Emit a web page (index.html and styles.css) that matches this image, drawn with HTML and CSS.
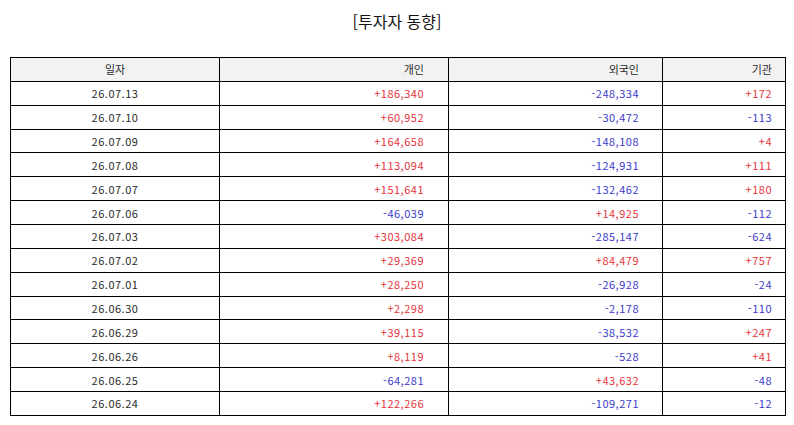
FILE: index.html
```html
<!DOCTYPE html>
<html lang="ko">
<head>
<meta charset="utf-8">
<title>투자자 동향</title>
<link rel="stylesheet" href="styles.css">
</head>
<body>
<h1 class="title">[투자자 동향]</h1>
<table class="flow">
  <colgroup>
    <col class="w-date"><col class="w-ind"><col class="w-for"><col class="w-inst">
  </colgroup>
  <thead>
    <tr><th class="c-date">일자</th><th class="c-ind">개인</th><th class="c-for">외국인</th><th class="c-inst">기관</th></tr>
  </thead>
  <tbody>
    <tr><td class="c-date">26.07.13</td><td class="c-ind up">+186,340</td><td class="c-for down">-248,334</td><td class="c-inst up">+172</td></tr>
    <tr><td class="c-date">26.07.10</td><td class="c-ind up">+60,952</td><td class="c-for down">-30,472</td><td class="c-inst down">-113</td></tr>
    <tr><td class="c-date">26.07.09</td><td class="c-ind up">+164,658</td><td class="c-for down">-148,108</td><td class="c-inst up">+4</td></tr>
    <tr><td class="c-date">26.07.08</td><td class="c-ind up">+113,094</td><td class="c-for down">-124,931</td><td class="c-inst up">+111</td></tr>
    <tr><td class="c-date">26.07.07</td><td class="c-ind up">+151,641</td><td class="c-for down">-132,462</td><td class="c-inst up">+180</td></tr>
    <tr><td class="c-date">26.07.06</td><td class="c-ind down">-46,039</td><td class="c-for up">+14,925</td><td class="c-inst down">-112</td></tr>
    <tr><td class="c-date">26.07.03</td><td class="c-ind up">+303,084</td><td class="c-for down">-285,147</td><td class="c-inst down">-624</td></tr>
    <tr><td class="c-date">26.07.02</td><td class="c-ind up">+29,369</td><td class="c-for up">+84,479</td><td class="c-inst up">+757</td></tr>
    <tr><td class="c-date">26.07.01</td><td class="c-ind up">+28,250</td><td class="c-for down">-26,928</td><td class="c-inst down">-24</td></tr>
    <tr><td class="c-date">26.06.30</td><td class="c-ind up">+2,298</td><td class="c-for down">-2,178</td><td class="c-inst down">-110</td></tr>
    <tr><td class="c-date">26.06.29</td><td class="c-ind up">+39,115</td><td class="c-for down">-38,532</td><td class="c-inst up">+247</td></tr>
    <tr><td class="c-date">26.06.26</td><td class="c-ind up">+8,119</td><td class="c-for down">-528</td><td class="c-inst up">+41</td></tr>
    <tr><td class="c-date">26.06.25</td><td class="c-ind down">-64,281</td><td class="c-for up">+43,632</td><td class="c-inst down">-48</td></tr>
    <tr><td class="c-date">26.06.24</td><td class="c-ind up">+122,266</td><td class="c-for down">-109,271</td><td class="c-inst down">-12</td></tr>
  </tbody>
</table>
</body>
</html>
```
FILE: styles.css
```css
html, body {
  margin: 0;
  padding: 0;
  background: #ffffff;
}
body {
  font-family: "Noto Sans CJK KR", "Noto Sans", sans-serif;
  color: #222222;
}
.title {
  margin: 10px 0 0 0;
  font-size: 16px;
  line-height: 22px;
  font-weight: normal;
  text-align: center;
  color: #111111;
}
.flow {
  margin: 25px 0 0 10px;
  width: 775px;
  border-collapse: collapse;
  table-layout: fixed;
  font-size: 11px;
}
.w-date { width: 209px; }
.w-ind { width: 229px; }
.w-for { width: 214px; }
.w-inst { width: 123px; }
.flow tr {
  height: 23.87px;
}
.flow th,
.flow td {
  border: 1px solid #000000;
  padding: 0;
  font-weight: normal;
  line-height: 14px;
  vertical-align: middle;
  white-space: nowrap;
  color: #2a2a2a;
}
.flow td {
  letter-spacing: 0.5px;
}
.flow th {
  background: #f2f2f2;
}
.c-date {
  text-align: center;
}
.flow .c-ind {
  text-align: right;
  padding-right: 24px;
}
.flow .c-for {
  text-align: right;
  padding-right: 23px;
}
.flow .c-inst {
  text-align: right;
  padding-right: 13px;
}
.flow .up {
  color: #e8333a;
}
.flow .down {
  color: #3a3acc;
}
```
